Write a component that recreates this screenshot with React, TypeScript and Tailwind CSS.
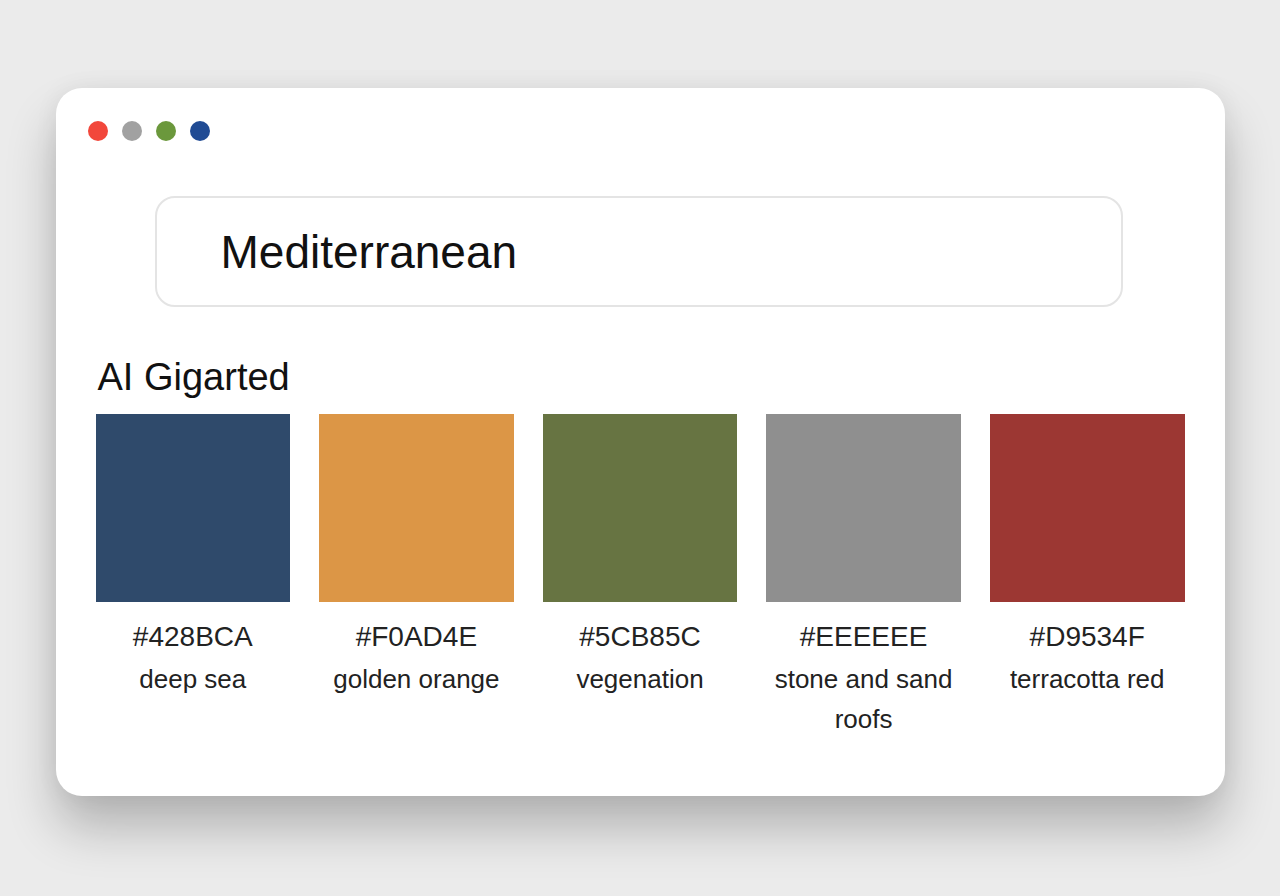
const dots = ['bg-[#f2473b]', 'bg-[#a1a1a1]', 'bg-[#6b983c]', 'bg-[#204b94]']

const swatches = [
  { hex: '#428BCA', name: 'deep sea', fill: 'bg-[#2f4a6b]' },
  { hex: '#F0AD4E', name: 'golden orange', fill: 'bg-[#dc9646]' },
  { hex: '#5CB85C', name: 'vegenation', fill: 'bg-[#677442]' },
  { hex: '#EEEEEE', name: 'stone and sand roofs', fill: 'bg-[#8f8f8f]' },
  { hex: '#D9534F', name: 'terracotta red', fill: 'bg-[#9c3733]' },
]

export default function App() {
  return (
    <div
      className="min-h-[896px] w-full bg-[#ebebeb] pt-[88px]"
      style={{ fontFamily: '"Liberation Sans", Arial, sans-serif' }}
    >
      <div className="relative mx-auto h-[708px] w-[1169px] rounded-[26px] bg-white px-[40px] pt-[121px] shadow-[0_32px_50px_rgba(0,0,0,0.24),0_0_24px_rgba(0,0,0,0.06)]">
        {/* window controls */}
        <div className="absolute left-[32px] top-[33px] flex gap-[14px]">
          {dots.map(c => (
            <span key={c} className={`h-[20px] w-[20px] rounded-full ${c}`} />
          ))}
        </div>

        {/* search field */}
        <div className="-mt-[13px] ml-[59px] mr-[62px] flex h-[111px] items-center rounded-[20px] border-[2px] border-[#e4e4e4] pl-[64px]">
          <span className="text-[46px] leading-none text-[#111]">
            Mediterranean
          </span>
        </div>

        <h2 className="mt-[51px] ml-[2px] text-[38px] leading-none text-[#111]">
          AI Gigarted
        </h2>

        {/* palette */}
        <div className="mt-[18px] grid grid-cols-5 gap-[29px]">
          {swatches.map(s => (
            <div key={s.hex} className="flex flex-col items-center">
              <div className={`h-[188px] w-full ${s.fill}`} />
              <p className="mt-[20px] text-[28px] leading-[30px] text-[#222]">
                {s.hex}
              </p>
              <p className="mt-[7px] text-center text-[26px] leading-[40px] text-[#222]">
                {s.name}
              </p>
            </div>
          ))}
        </div>
      </div>
    </div>
  )
}
